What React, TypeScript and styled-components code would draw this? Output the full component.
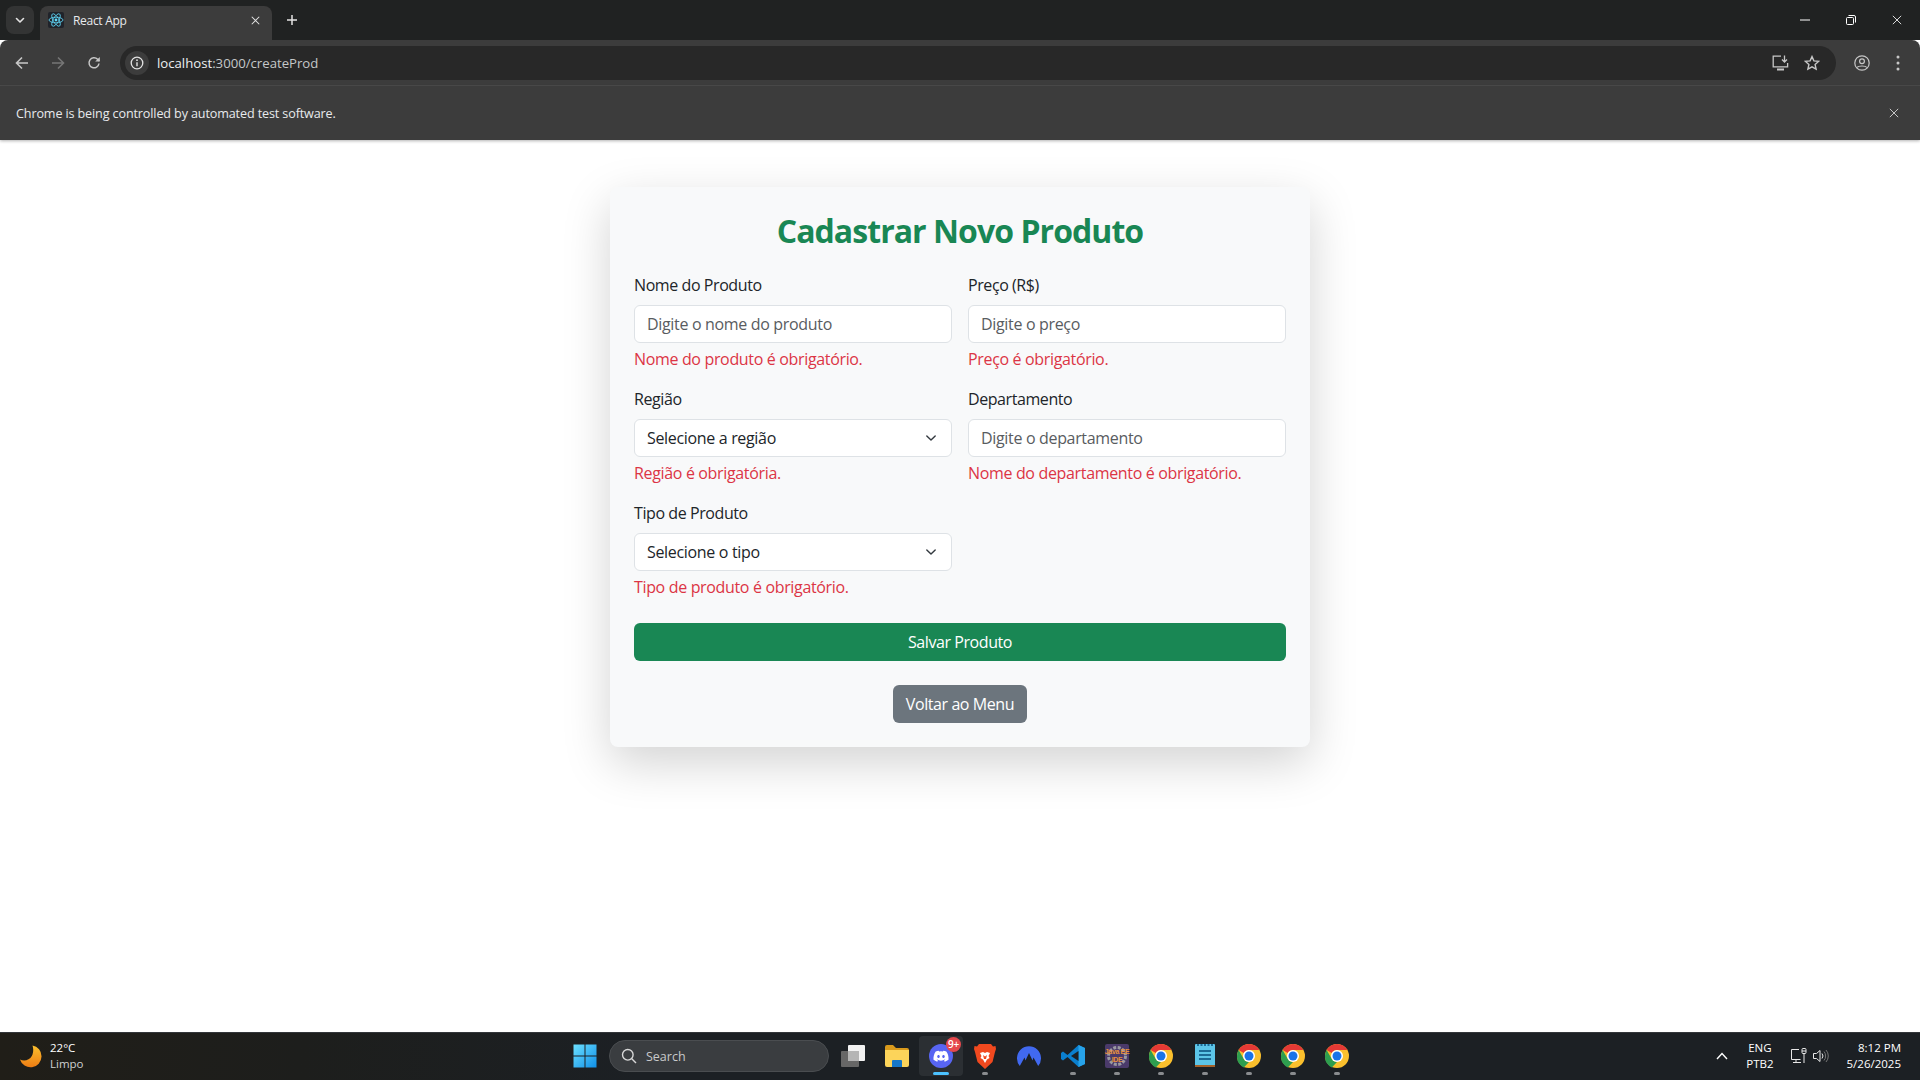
import React from "react";
import styled, { createGlobalStyle } from "styled-components";

const UI = `"Open Sans", "Noto Sans", "Liberation Sans", sans-serif`;

const Global = createGlobalStyle`
  html, body { margin: 0; padding: 0; height: 100%; background: #fff; }
  * { box-sizing: border-box; }
  body { font-family: ${UI}; overflow: hidden; }
  #root { height: 100%; }
`;

const Screen = styled.div`
  height: 1080px; width: 1920px; display: flex; flex-direction: column;
`;

/* Browser chrome */
const TabStrip = styled.div`
  height: 40px; background: #202222; display: flex; align-items: flex-start; padding: 6px 0 0 6px; color: #fff;
`;
const TabSearch = styled.div`
  width: 28px; height: 28px; border-radius: 8px; background: #333434; display: flex; align-items: center; justify-content: center; margin-right: 6px;
`;
const Tab = styled.div`
  width: 232px; height: 34px; background: #3c3c3c; border-radius: 8px 8px 0 0; display: flex; align-items: center; padding: 0 12px 6px 8px; font-size: 12px; color: #e8eaed; position: relative;
  gap: 9px;
`;
const TabTitle = styled.span`
  flex: 1; letter-spacing: -0.3px;
`;
const NewTab = styled.div`
  width: 28px; height: 28px; margin-left: 6px; display: flex; align-items: center; justify-content: center;
`;
const Spacer = styled.div`flex: 1;`;
const WinControls = styled.div`
  display: flex; align-self: flex-start; margin-top: -6px;
`;
const WinButton = styled.div`
  width: 46px; height: 40px; display: flex; align-items: center; justify-content: center;
`;
const Toolbar = styled.div`
  height: 46px; background: #3c3c3c; border-bottom: 1px solid #4c4c4c; display: flex; align-items: center; padding: 0 4px 0 4px; border-radius: 8px 8px 0 0;
`;
const NavIcon = styled.div`
  width: 36px; height: 34px; display: flex; align-items: center; justify-content: center; flex: none;
`;
const Omnibox = styled.div`
  flex: 1; height: 34px; margin: 0 8px 0 8px; background: #282828; border-radius: 17px; display: flex; align-items: center; padding: 0 16px 0 5px;
`;
const SiteInfo = styled.div`
  width: 24px; height: 24px; border-radius: 50%; background: #3c3c3c; display: flex; align-items: center; justify-content: center; margin-right: 8px;
`;
const Url = styled.span`
  font-size: 13.2px; color: #c4c7c8; letter-spacing: -0.01px; flex: 1;
`;
const UrlHost = styled.span`color: #eceef0;`;
const OmniIcons = styled.div`display: flex; gap: 15px; align-items: center;`;
const InfoBar = styled.div`
  height: 54px; background: #3c3c3c; display: flex; align-items: center; padding: 0 21px 0 16px; font-size: 12.6px; color: #e8eaed; box-shadow: 0 1px 3px rgba(0,0,0,.3); position: relative; z-index: 1; justify-content: space-between; letter-spacing: -0.13px;
`;

/* Page */
const Page = styled.main`
  flex: 1; background: #fff; display: flex; flex-direction: column; align-items: center; padding-top: 47px; overflow: hidden;
`;
const Card = styled.section`
  width: 700px; padding: 24px; background: #f8f9fa; border-radius: 8px; box-shadow: 0 16px 48px rgba(0,0,0,.175);
  display: flex; flex-direction: column;
`;
const Title = styled.h2`
  margin: 0 0 23px; padding-top: 1px; font-size: 32px; line-height: 38.4px; font-weight: 700; color: #198754; text-align: center; letter-spacing: -0.95px;
`;
const FormGrid = styled.form`
  display: grid; grid-template-columns: 1fr 1fr; column-gap: 16px;
`;
const Field = styled.div`
  margin-bottom: 16px; display: flex; flex-direction: column;
`;
const Label = styled.label`
  font-size: 16px; line-height: 24px; margin-bottom: 8px; color: #212529; letter-spacing: -0.42px;
`;
const Control = styled.div`
  height: 38px; background: #fff; border: 1px solid #dee2e6; border-radius: 6px; padding: 0 12px; display: flex; align-items: center; justify-content: space-between; font-size: 16px;
  letter-spacing: -0.33px;
`;
const Placeholder = styled.span`color: #595c5f;`;
const SelectValue = styled.span`color: #212529;`;
const Invalid = styled.div`
  margin-top: 4px; font-size: 16px; line-height: 24px; color: #dc3545; letter-spacing: -0.34px;
`;
const Primary = styled.button`
  grid-column: 1 / -1; margin-top: 8px; height: 38px; border: 0; border-radius: 6px; background: #198754; color: #fff; font: 16px ${UI}; letter-spacing: -0.42px;
`;
const BackWrap = styled.div`
  display: flex; justify-content: center; margin-top: 24px;
`;
const Secondary = styled.button`
  width: 134px; height: 38px; border: 0; border-radius: 6px; background: #6c757d; color: #fff; font: 16px ${UI}; letter-spacing: -0.42px; padding: 0;
`;

/* Taskbar */
const Taskbar = styled.footer`
  height: 48px; background: linear-gradient(90deg, #201e18 0, #1d1e1c 300px, #1c2024 640px); border-top: 1px solid #33363a; padding-bottom: 1px; display: grid; grid-template-columns: 1fr auto 1fr; align-items: center; color: #fff;
`;
const Weather = styled.div`
  display: flex; align-items: center; padding-left: 19px; gap: 7px;
`;
const WeatherText = styled.div`
  display: flex; flex-direction: column; font-size: 11.5px; line-height: 16px;
`;
const WeatherSub = styled.span`color: #cfd0d1;`;
const Center = styled.div`
  display: flex; align-items: center; padding-left: 2px;
`;
const TaskItem = styled.div<{ $active?: boolean }>`
  width: 44px; height: 40px; display: flex; align-items: center; justify-content: center; position: relative; border-radius: 4px;
  background: ${p => (p.$active ? "#2b2f33" : "transparent")};
`;
const Indicator = styled.span<{ $active?: boolean }>`
  position: absolute; bottom: 1px; left: 50%; transform: translateX(-50%); height: 3px; border-radius: 2px;
  width: ${p => (p.$active ? 16 : 6)}px; background: ${p => (p.$active ? "#4cc2ff" : "#8a8c8f")};
`;
const Badge = styled.span`
  position: absolute; top: 1px; right: 2px; width: 15px; height: 15px; border-radius: 50%; background: #e5484d; color: #fff; font-size: 10px; line-height: 15px; text-align: center; font-weight: 600; letter-spacing: -0.3px;
`;
const SearchBox = styled.div`
  width: 220px; height: 32px; margin: 0 2px; border-radius: 16px; background: #3a3d40; border: 1px solid #4a4d50; display: flex; align-items: center; padding-left: 11px; gap: 9px; font-size: 12.5px; color: #c9cacb;
`;
const EclipseIcon = styled.div`
  width: 24px; height: 24px; background: #4a3a6a; border-radius: 2px; position: relative; display: flex; align-items: center; justify-content: center;
`;
const EclipseGear = styled.svg`
  position: absolute; inset: 0;
`;
const EclipseLabel = styled.div`
  position: relative; display: flex; flex-direction: column; align-items: center; color: #e8913c; font-size: 7px; line-height: 8px; font-weight: 700; letter-spacing: -0.35px; font-family: "Liberation Sans", sans-serif; white-space: nowrap;
`;
const Tray = styled.div`
  display: flex; align-items: center; justify-content: flex-end; padding-right: 19px; font-size: 11.5px;
`;
const TrayChevron = styled.div`
  margin-right: 18px; display: flex;
`;
const Lang = styled.div`
  display: flex; flex-direction: column; align-items: center; line-height: 16px; margin-right: 17px;
`;
const TrayIcons = styled.div`display: flex; align-items: center; gap: 6px; margin-right: 18px;`;
const Clock = styled.div`
  display: flex; flex-direction: column; align-items: flex-end; line-height: 16px;
`;

const stroke = { fill: "none", stroke: "currentColor", strokeWidth: 1.6, strokeLinecap: "round" as const, strokeLinejoin: "round" as const };

const Chevron = ({ size = 12, color = "#e3e3e3" }) => (
  <svg width={size} height={size} viewBox="0 0 12 12" style={{ color }}><path d="M2.5 4.5 6 8l3.5-3.5" {...stroke} /></svg>
);
const Close = ({ size = 12, color = "#e3e3e3", w = 1.4 }) => (
  <svg width={size} height={size} viewBox="0 0 12 12"><path d="M1 1l10 10M11 1 1 11" stroke={color} strokeWidth={w} /></svg>
);
const ReactLogo = () => (
  <svg width="16" height="16" viewBox="0 0 16 16" style={{ background: "#20232a", borderRadius: 2 }}>
    <g fill="none" stroke="#61dafb" strokeWidth=".8">
      <ellipse cx="8" cy="8" rx="7" ry="2.8" />
      <ellipse cx="8" cy="8" rx="7" ry="2.8" transform="rotate(60 8 8)" />
      <ellipse cx="8" cy="8" rx="7" ry="2.8" transform="rotate(120 8 8)" />
    </g>
    <circle cx="8" cy="8" r="1.4" fill="#61dafb" />
  </svg>
);
const ArrowLeft = ({ color = "#c7c7c7" }) => (
  <svg width="14" height="14" viewBox="0 0 14 14"><path d="M13 7H2M7 1.5 1.5 7 7 12.5" fill="none" stroke={color} strokeWidth="1.6" /></svg>
);
const ArrowRight = ({ color = "#767676" }) => (
  <svg width="14" height="14" viewBox="0 0 14 14"><path d="M1 7h11M7 1.5 12.5 7 7 12.5" fill="none" stroke={color} strokeWidth="1.6" /></svg>
);
const Reload = () => (
  <svg width="14" height="14" viewBox="0 0 14 14"><path d="M12 7.5A5 5 0 1 1 10.6 3.3L12.3 5" fill="none" stroke="#c7c7c7" strokeWidth="1.5" /><path d="M12.8 1v4.6H8.2z" fill="#c7c7c7" /></svg>
);
const InfoIcon = () => (
  <svg width="14" height="14" viewBox="0 0 14 14"><circle cx="7" cy="7" r="5.8" fill="none" stroke="#e3e3e3" strokeWidth="1.3" /><path d="M7 6.2v4" stroke="#e3e3e3" strokeWidth="1.4" /><circle cx="7" cy="4.2" r=".9" fill="#e3e3e3" /></svg>
);
const InstallIcon = () => (
  <svg width="17" height="16" viewBox="0 0 17 16" fill="none" stroke="#c7c7c7" strokeWidth="1.3">
    <path d="M9 1.2H1.2v10.6h14.4V8" /><path d="M5 14.5h7" strokeWidth="2" /><path d="M12.5 0.5v6M10 4.5l2.5 2.5L15 4.5" />
  </svg>
);
const StarIcon = () => (
  <svg width="16" height="16" viewBox="0 0 16 16"><path d="M8 1.6l1.9 4.3 4.7.5-3.5 3.1 1 4.6L8 11.8 3.9 14.1l1-4.6L1.4 6.4l4.7-.5z" fill="none" stroke="#c7c7c7" strokeWidth="1.4" /></svg>
);
const ProfileIcon = () => (
  <svg width="16" height="16" viewBox="0 0 16 16" fill="none" stroke="#c7c7c7" strokeWidth="1.2"><circle cx="8" cy="8" r="7.2" /><circle cx="8" cy="6.2" r="2.4" /><path d="M3 12.5c1.5-2 8.5-2 10 0" /></svg>
);
const Dots = () => (
  <svg width="4" height="16" viewBox="0 0 4 16"><circle cx="2" cy="2" r="1.5" fill="#c7c7c7" /><circle cx="2" cy="8" r="1.5" fill="#c7c7c7" /><circle cx="2" cy="14" r="1.5" fill="#c7c7c7" /></svg>
);
const Minimize = () => <svg width="10" height="10" viewBox="0 0 10 10"><path d="M0 5h10" stroke="#fff" /></svg>;
const Restore = () => (
  <svg width="10" height="10" viewBox="0 0 10 10" fill="none" stroke="#fff"><rect x=".5" y="2.5" width="7" height="7" rx="1" /><path d="M2.5 .5H8A1.500 1.500 0 0 1 9.500 2V7.500" /></svg>
);
const PlusIcon = () => <svg width="12" height="12" viewBox="0 0 12 12"><path d="M6 1v10M1 6h10" stroke="#e3e3e3" strokeWidth="1.5" /></svg>;

const SelectCaret = () => (
  <svg width="16" height="16" viewBox="0 0 16 16"><path d="m2 5 6 6 6-6" fill="none" stroke="#343a40" strokeWidth="2" strokeLinecap="round" strokeLinejoin="round" transform="translate(2.4 2.4) scale(.7)" /></svg>
);

const Moon = () => (
  <svg width="24" height="24" viewBox="0 0 24 24">
    <defs><linearGradient id="mn" x1="0" y1="0" x2="0" y2="1"><stop offset="0" stopColor="#fbc02d" /><stop offset="1" stopColor="#ee7d14" /></linearGradient></defs>
    <path d="M13.5 1.5A11 11 0 1 1 1 15.5c4 2.2 9.500 .8 11.800-3.400 1.700-3.300 1.800-7.300 .7-10.600z" fill="url(#mn)" />
  </svg>
);
const WindowsLogo = () => (
  <svg width="24" height="24" viewBox="0 0 24 24">
    <defs><linearGradient id="wl" x1="0" y1="0" x2="1" y2="1"><stop offset="0" stopColor="#6ce0ff" /><stop offset="1" stopColor="#0f8fe8" /></linearGradient></defs>
    <path d="M.5.5h11v11H.5zM12.5.5h11v11h-11zM.5 12.500h11v11H.5zM12.500 12.500h11v11h-11z" fill="url(#wl)" />
  </svg>
);
const SearchGlass = () => (
  <svg width="16" height="16" viewBox="0 0 16 16" fill="none" stroke="#d8d8d8" strokeWidth="1.4"><circle cx="6.8" cy="6.8" r="5.300" /><path d="m10.800 10.800 4.200 4.200" /></svg>
);
const TaskView = () => (
  <svg width="24" height="22" viewBox="0 0 24 22">
    <rect x="7" y="0" width="17" height="16" rx="1" fill="#f2f2f2" />
    <rect x="0" y="6" width="18" height="16" rx="1" fill="#6c6c6c" opacity=".95" />
    <rect x="7" y="6" width="11" height="10" fill="#b5b5b5" />
  </svg>
);
const FolderIcon = () => (
  <svg width="24" height="22" viewBox="0 0 24 22">
    <path d="M0 2a2 2 0 0 1 2-2h6l3 3h11a2 2 0 0 1 2 2v1H0z" fill="#d99a1c" />
    <path d="M0 5h24v15a2 2 0 0 1-2 2H2a2 2 0 0 1-2-2z" fill="#fcd45a" />
    <path d="M7 16a1 1 0 0 1 1-1h8a1 1 0 0 1 1 1v6H7z" fill="#1677c9" />
  </svg>
);
const DiscordIcon = () => (
  <svg width="24" height="24" viewBox="0 0 24 24">
    <circle cx="12" cy="12" r="12" fill="#5865f2" />
    <path d="M17.3 7.6A12 12 0 0 0 14.3 6.7l-.4.8a11 11 0 0 0-3.800 0l-.4-.8a12 12 0 0 0-3 .9C4.800 10.400 4.300 13.100 4.500 15.800a12 12 0 0 0 3.700 1.900l.8-1.300-1.300-.6.3-.2a8.500 8.500 0 0 0 8 0l.3.2-1.300.6.8 1.300a12 12 0 0 0 3.700-1.900c.3-3.100-.5-5.800-2.200-8.200zM9.500 14.100c-.7 0-1.300-.7-1.300-1.500s.6-1.500 1.300-1.500 1.300.7 1.300 1.500-.6 1.500-1.300 1.500zm5 0c-.7 0-1.300-.7-1.300-1.500s.6-1.500 1.300-1.500 1.300.7 1.300 1.500-.6 1.500-1.300 1.500z" fill="#fff" />
  </svg>
);
const BraveIcon = () => (
  <svg width="22" height="25" viewBox="0 0 22 25">
    <path d="M5 0h12l2 2.500 2.500-.5L22 5l-1 3-2.500 10L11 25 3.500 18 1 8 0 5l.5-3 2.500.5z" fill="#f1491f" />
    <path d="M6 9l3-1 2 1 2-1 3 1-1.500 3 1 2-2.500 1.500L11 19l-2-3.500L6.500 14l1-2z" fill="#fff" />
    <path d="M9 11l2 1.500 2-1.500-1 4h-2z" fill="#f1491f" />
  </svg>
);
const NordIcon = () => (
  <svg width="24" height="20" viewBox="0 0 24 20">
    <path d="M2.800 20A12 12 0 1 1 21.200 20L16.500 11.500l-1 3-3.500-7.500-3.500 7.500-1-3z" fill="#4169f0" />
  </svg>
);
const VSCodeIcon = () => (
  <svg width="24" height="24" viewBox="0 0 24 24">
    <path d="M17.500 1 24 4v16l-6.500 3-11-10L2 16.500 0 15V9l2-1.500L6.500 11z" fill="#0a7fcf" />
    <path d="M17.500 1 24 4v16l-6.500 3V1z" fill="#27a3ea" />
    <path d="M17.500 7 10 12l7.500 5z" fill="#1c2024" />
  </svg>
);
const Chrome = () => (
  <svg width="24" height="24" viewBox="0 0 24 24">
    <circle cx="12" cy="12" r="12" fill="#fbc02d" />
    <path d="M12 0a12 12 0 0 1 10.400 6H12a6 6 0 0 0-5.200 3L1.600 6A12 12 0 0 1 12 0z" fill="#e53935" />
    <path d="M1.600 6l5.200 9a6 6 0 0 0 5.200 3l-5.200 5.400A12 12 0 0 1 0 12a12 12 0 0 1 1.600-6z" fill="#2e9e4f" />
    <circle cx="12" cy="12" r="6" fill="#fff" />
    <circle cx="12" cy="12" r="4.500" fill="#1a73e8" />
  </svg>
);
const NotepadIcon = () => (
  <svg width="22" height="24" viewBox="0 0 22 24">
    <rect width="20" height="23" x="1" y="0" fill="#5cc5e8" rx="1" />
    <rect width="20" height="2" x="1" y="21" fill="#a4622a" />
    <path d="M5 7h12M5 11h12M5 15h12" stroke="#1c6a96" strokeWidth="2" />
    <path d="M3 1h16" stroke="#1c6a96" strokeWidth="2" strokeDasharray="2 1.500" />
  </svg>
);
const Network = () => (
  <svg width="16" height="16" viewBox="0 0 16 16" fill="none" stroke="#e8e8e8" strokeWidth="1"><path d="M8 1.500H.5v10h9M5 11.500v2.500M2 14.500h8" /><rect x="11" y=".5" width="4" height="5" rx="1" /><path d="M11 3h4M13 5.500v9.500" /></svg>
);
const Speaker = () => (
  <svg width="16" height="16" viewBox="0 0 16 16" fill="none" stroke="#e8e8e8" strokeWidth="1"><path d="M.5 5.500h3L7 2.500v11l-3.500-3h-3z" /><path d="M9 5.500a4 4 0 0 1 0 5" /><path d="M11 3.500a7 7 0 0 1 0 9M13 2a9 9 0 0 1 0 12" stroke="#777" /></svg>
);
const TrayUp = () => (
  <svg width="12" height="8" viewBox="0 0 12 8"><path d="M1 7l5-5.500L11 7" fill="none" stroke="#fff" strokeWidth="1.400" /></svg>
);

const fields = [
  { label: "Nome do Produto", ph: "Digite o nome do produto", err: "Nome do produto é obrigatório." },
  { label: "Preço (R$)", ph: "Digite o preço", err: "Preço é obrigatório." },
  { label: "Região", sel: "Selecione a região", err: "Região é obrigatória." },
  { label: "Departamento", ph: "Digite o departamento", err: "Nome do departamento é obrigatório." },
  { label: "Tipo de Produto", sel: "Selecione o tipo", err: "Tipo de produto é obrigatório." },
];

export default function App() {
  return (
    <Screen>
      <Global />
      <TabStrip>
        <TabSearch><Chevron /></TabSearch>
        <Tab>
          <ReactLogo />
          <TabTitle>React App</TabTitle>
          <Close size={9} />
        </Tab>
        <NewTab><PlusIcon /></NewTab>
        <Spacer />
        <WinControls>
          <WinButton><Minimize /></WinButton>
          <WinButton><Restore /></WinButton>
          <WinButton><Close size={10} color="#fff" w={1} /></WinButton>
        </WinControls>
      </TabStrip>
      <Toolbar>
        <NavIcon><ArrowLeft /></NavIcon>
        <NavIcon><ArrowRight /></NavIcon>
        <NavIcon><Reload /></NavIcon>
        <Omnibox>
          <SiteInfo><InfoIcon /></SiteInfo>
          <Url><UrlHost>localhost</UrlHost>:3000/createProd</Url>
          <OmniIcons><InstallIcon /><StarIcon /></OmniIcons>
        </Omnibox>
        <NavIcon><ProfileIcon /></NavIcon>
        <NavIcon><Dots /></NavIcon>
      </Toolbar>
      <InfoBar>
        <span>Chrome is being controlled by automated test software.</span>
        <Close size={10} color="#c7c7c7" w={1.2} />
      </InfoBar>
      <Page>
        <Card>
          <Title>Cadastrar Novo Produto</Title>
          <FormGrid>
            {fields.map(f => (
              <Field key={f.label}>
                <Label>{f.label}</Label>
                <Control>
                  {f.ph ? <Placeholder>{f.ph}</Placeholder> : <SelectValue>{f.sel}</SelectValue>}
                  {f.sel && <SelectCaret />}
                </Control>
                <Invalid>{f.err}</Invalid>
              </Field>
            ))}
            <Primary type="button">Salvar Produto</Primary>
          </FormGrid>
          <BackWrap><Secondary type="button">Voltar ao Menu</Secondary></BackWrap>
        </Card>
      </Page>
      <Taskbar>
        <Weather>
          <Moon />
          <WeatherText>
            <span>22°C</span>
            <WeatherSub>Limpo</WeatherSub>
          </WeatherText>
        </Weather>
        <Center>
          <TaskItem><WindowsLogo /></TaskItem>
          <SearchBox><SearchGlass />Search</SearchBox>
          <TaskItem><TaskView /></TaskItem>
          <TaskItem><FolderIcon /></TaskItem>
          <TaskItem $active><DiscordIcon /><Badge>9+</Badge><Indicator $active /></TaskItem>
          <TaskItem><BraveIcon /><Indicator /></TaskItem>
          <TaskItem><NordIcon /></TaskItem>
          <TaskItem><VSCodeIcon /><Indicator /></TaskItem>
          <TaskItem>
            <EclipseIcon>
              <EclipseGear width="24" height="24" viewBox="0 0 24 24">
                <circle cx="12" cy="12" r="8.500" fill="none" stroke="#9a9aa0" strokeWidth="3" strokeDasharray="3 1.500" />
              </EclipseGear>
              <EclipseLabel><span>Java EE</span><span>IDE</span></EclipseLabel>
            </EclipseIcon>
            <Indicator />
          </TaskItem>
          <TaskItem><Chrome /><Indicator /></TaskItem>
          <TaskItem><NotepadIcon /><Indicator /></TaskItem>
          <TaskItem><Chrome /><Indicator /></TaskItem>
          <TaskItem><Chrome /><Indicator /></TaskItem>
          <TaskItem><Chrome /><Indicator /></TaskItem>
        </Center>
        <Tray>
          <TrayChevron><TrayUp /></TrayChevron>
          <Lang><span>ENG</span><span>PTB2</span></Lang>
          <TrayIcons><Network /><Speaker /></TrayIcons>
          <Clock><span>8:12 PM</span><span>5/26/2025</span></Clock>
        </Tray>
      </Taskbar>
    </Screen>
  );
}
